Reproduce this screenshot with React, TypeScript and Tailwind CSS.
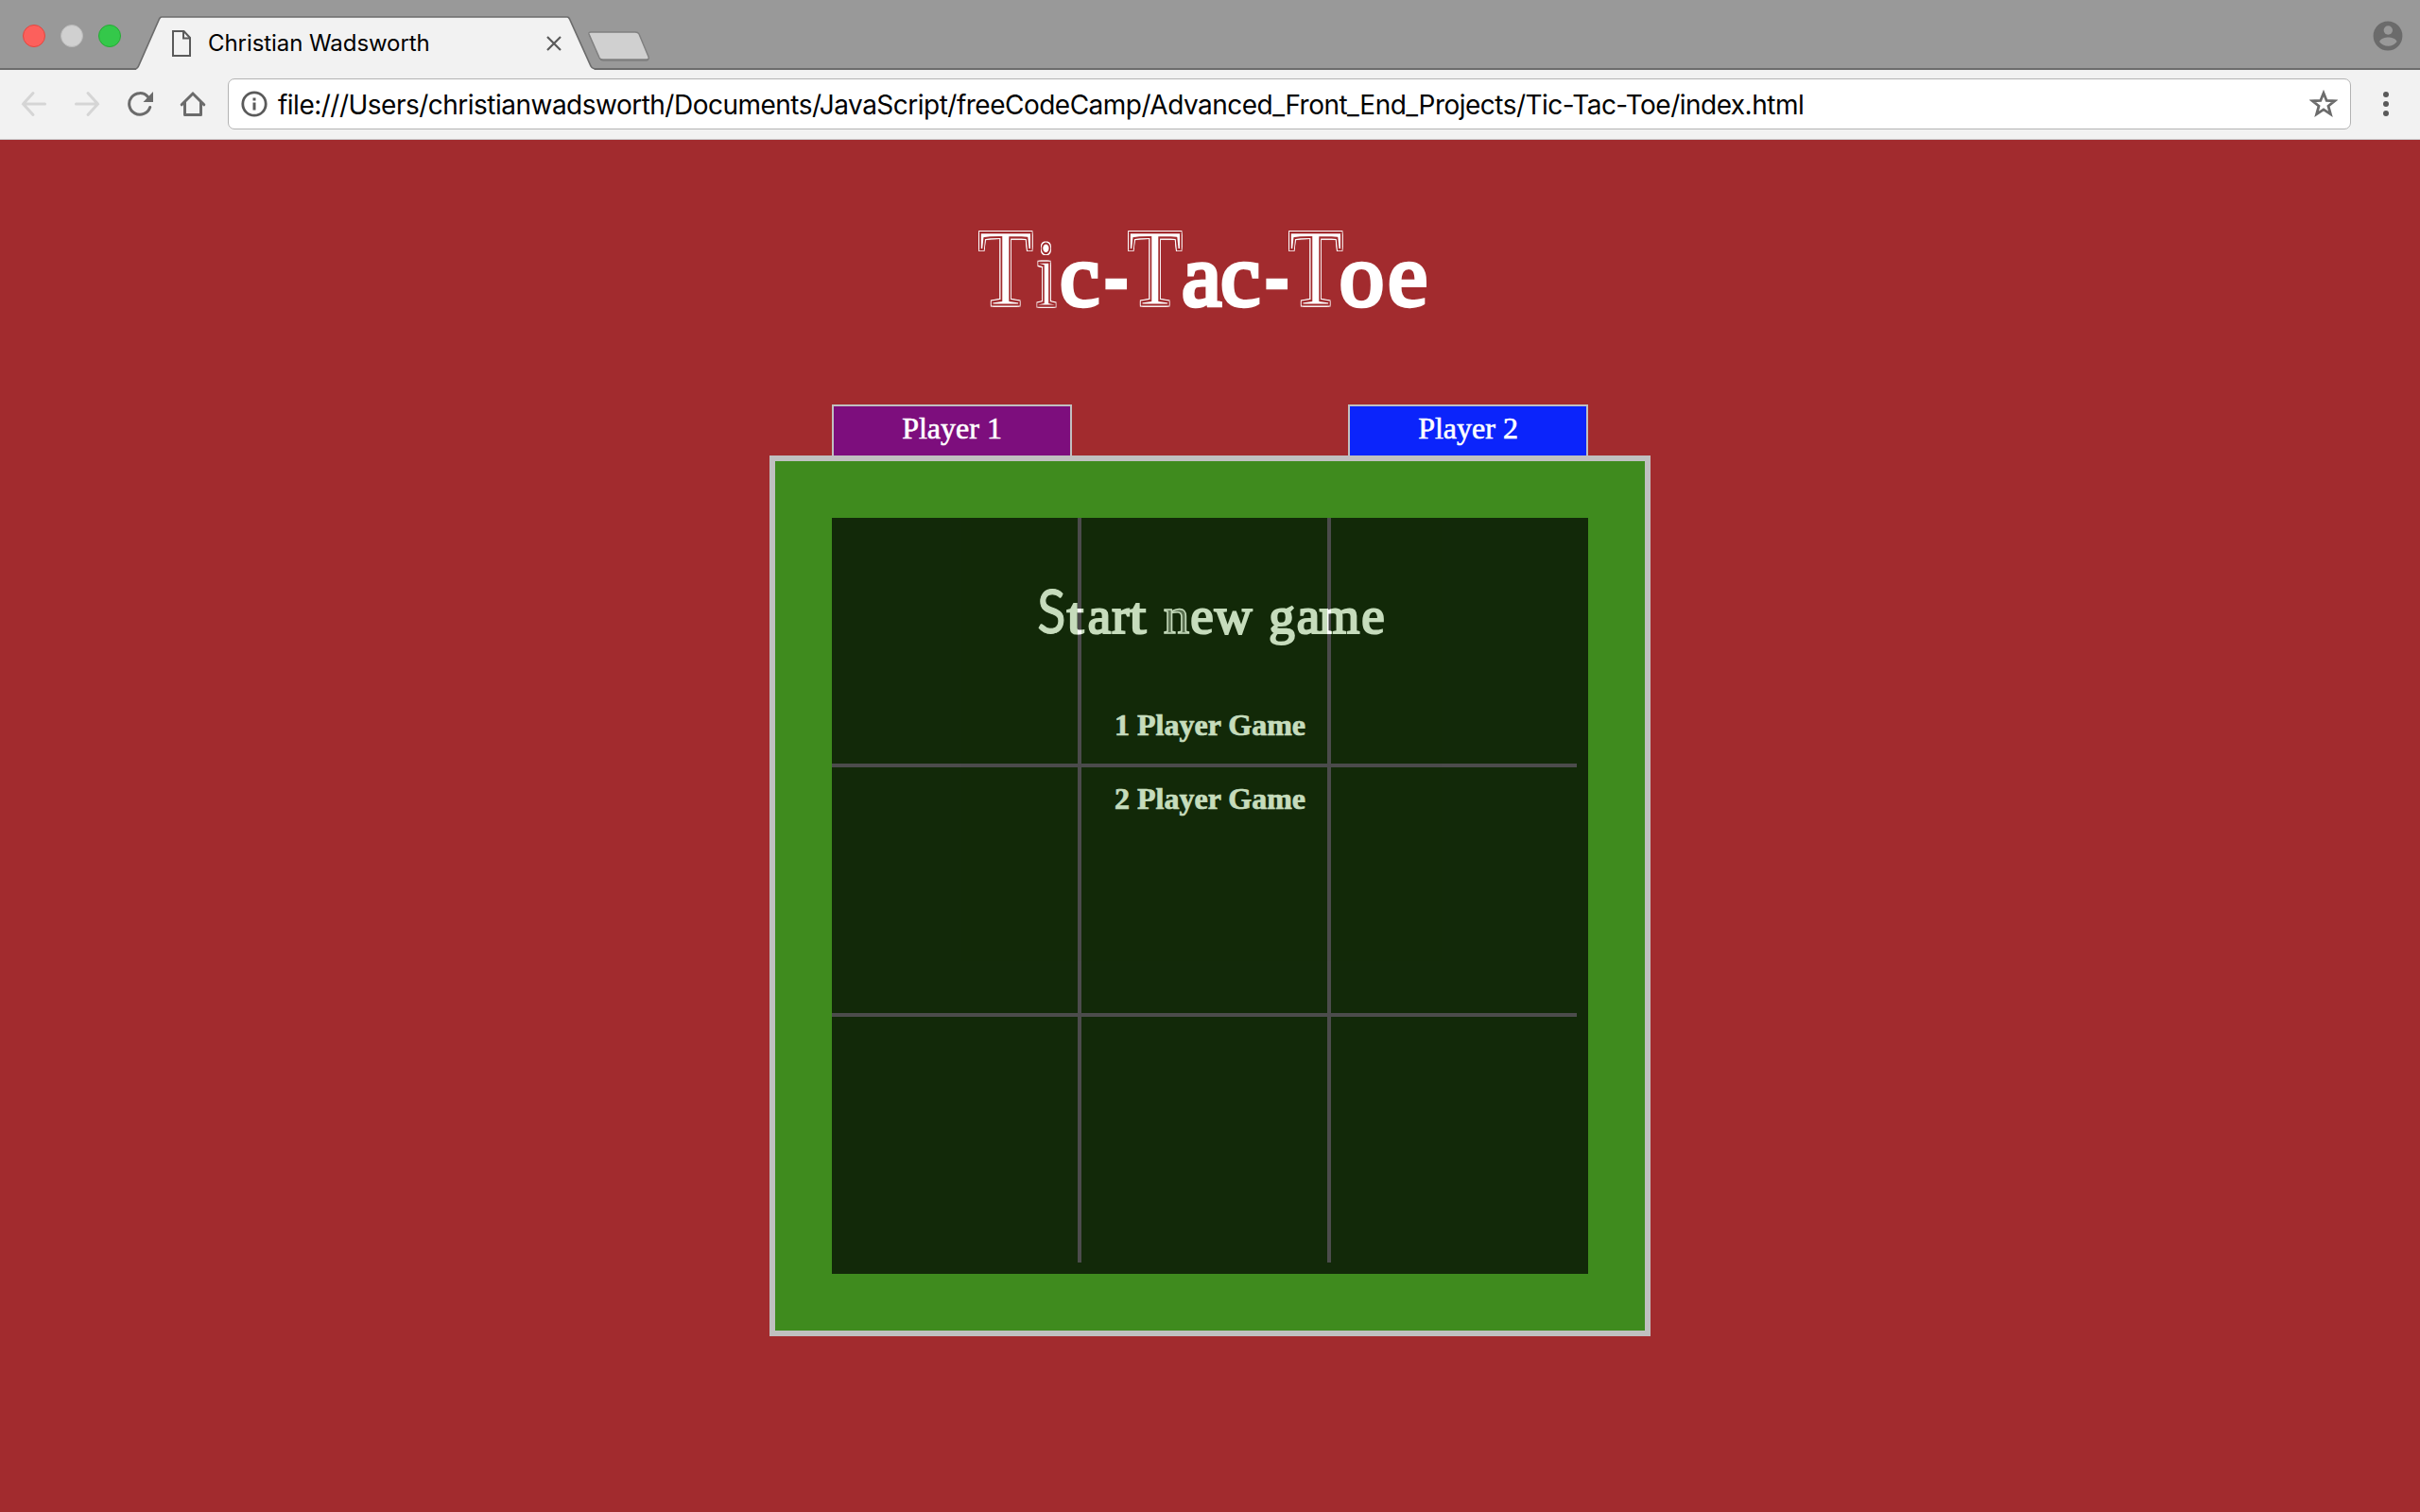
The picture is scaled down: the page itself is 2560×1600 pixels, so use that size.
import React from "react";

const outlined =
  "inline-block origin-bottom text-white [-webkit-text-stroke:2.2px_#a22b2e] [text-shadow:2px_0_#fff,-2px_0_#fff,0_2px_#fff,0_-2px_#fff,2px_2px_#fff,-2px_2px_#fff,2px_-2px_#fff,-2px_-2px_#fff]";
const capital = `${outlined} text-[117px] scale-x-[.8]`;
const solid = "inline-block text-[94px] [-webkit-text-stroke:4.5px_#fff]";
const hyphen = "inline-block scale-x-[.78] text-[94px] [-webkit-text-stroke:4.5px_#fff]";

type Letter = { ch: string; box: string; cls: string };

const title: Letter[] = [
  { ch: "T", box: "w-[60px]", cls: capital },
  { ch: "i", box: "w-[21px] ml-[2px]", cls: `${outlined} text-[100px] scale-x-[.75]` },
  { ch: "c", box: "w-[40px] ml-[5px]", cls: solid },
  { ch: "-", box: "w-[24px] ml-[7px]", cls: hyphen },
  { ch: "T", box: "w-[60px] ml-[-1px]", cls: capital },
  { ch: "a", box: "w-[46px] ml-[-4px]", cls: solid },
  { ch: "c", box: "w-[40px] ml-[-2px]", cls: solid },
  { ch: "-", box: "w-[24px] ml-[7px]", cls: hyphen },
  { ch: "T", box: "w-[60px] ml-[-1px]", cls: capital },
  { ch: "o", box: "w-[47px] ml-[-5px]", cls: solid },
  { ch: "e", box: "w-[40px] ml-[5px]", cls: solid },
];

const heading: Letter[] = [
  { ch: "S", box: "w-[26px]", cls: "inline-block font-[Lato] text-[64px] scale-x-[.87] [-webkit-text-stroke:1px_#fff]" },
  { ch: "t", box: "w-[18px] ml-[4px]", cls: "inline-block scale-x-[1.15]" },
  { ch: "a", box: "w-[26px] ml-[3px]", cls: "" },
  { ch: "r", box: "w-[19px]", cls: "" },
  { ch: "t", box: "w-[18px]", cls: "inline-block scale-x-[1.15]" },
  { ch: "n", box: "w-[27px] ml-[18px]", cls: "text-white/40 [-webkit-text-stroke:1.5px_#fff]" },
  { ch: "e", box: "w-[23px] ml-[2px]", cls: "" },
  { ch: "w", box: "w-[41px] ml-[1px]", cls: "" },
  { ch: "g", box: "w-[26px] ml-[18px]", cls: "" },
  { ch: "a", box: "w-[26px] ml-[2px]", cls: "" },
  { ch: "m", box: "w-[40px]", cls: "" },
  { ch: "e", box: "w-[23px] ml-[4px]", cls: "" },
];

function Letters({ items }: { items: Letter[] }) {
  return (
    <>
      {items.map((l, i) => (
        <span key={i} className={`flex shrink-0 justify-center ${l.box}`}>
          <span className={l.cls}>{l.ch}</span>
        </span>
      ))}
    </>
  );
}

function TabStrip() {
  return (
    <div className="flex h-[74px] border-b-2 border-[#6c6c6c] bg-[#999]">
      <div className="flex w-[144px] items-start gap-4 pl-6 pt-[26px]">
        <span className="h-6 w-6 rounded-full border border-[#e2463f] bg-[#fc605c]" />
        <span className="h-6 w-6 rounded-full border border-[#b9b9b9] bg-[#d0d0d0]" />
        <span className="h-6 w-6 rounded-full border border-[#27aa35] bg-[#34c84a]" />
      </div>
      <div className="relative h-[74px] w-[485px]">
        <svg className="absolute inset-0" width="485" height="74" viewBox="0 0 485 74">
          <path d="M-1 74 L0 73 Q1.500 72.500 2.500 70 L24.500 20 Q25.500 18 27 18 H456 Q457.500 18 458.500 20 L481 70 Q482 72.500 484 73 L486 74Z" fill="#f2f2f2" />
          <path d="M-1 73.200 Q1.500 72.500 2.500 70 L24.500 20 Q25.500 18 27 18 H456 Q457.500 18 458.500 20 L481 70 Q482 72.500 486 73.200" fill="none" stroke="#6c6c6c" strokeWidth="1.700" />
        </svg>
        <div className="relative flex h-full items-center pl-[37px] pt-[18px]">
          <svg width="22" height="28" viewBox="0 0 22 28" fill="none" stroke="#5a5a5a" strokeWidth="2">
            <path d="M2 1H13.500L20 8V27H2Z" />
            <path d="M13 1V8.500H20" />
          </svg>
          <span className="ml-[17px] w-[250px] whitespace-nowrap font-[Inter] text-[24px] leading-8 tracking-[-0.07px] text-black">
            Christian Wadsworth
          </span>
          <svg className="ml-[108px]" width="16" height="16" viewBox="0 0 16 16" stroke="#5a5a5a" strokeWidth="2.200">
            <path d="M1 1L15 15M15 1L1 15" />
          </svg>
        </div>
      </div>
      <svg className="ml-[-8px] mt-[32px]" width="68" height="34" viewBox="0 0 68 34">
        <path d="M4 3H51Q54 3 55 5L65 29Q66 32.500 63 32.500H17Q14 32.500 13 30L2 5Q1.500 3 4 3Z" fill="#777" />
        <path d="M4 2H51Q54 2 55 4L65 28Q66 31 63 31H17Q14 31 13 29L2 4Q1.500 2 4 2Z" fill="#d0d0d0" stroke="#808080" strokeWidth="1.500" />
      </svg>
      <svg className="ml-auto mr-[18px] mt-[22px]" width="32" height="32" viewBox="0 0 32 32">
        <circle cx="16" cy="16" r="15.400" fill="#6b6b6b" />
        <circle cx="16.300" cy="10" r="4.700" fill="#999" />
        <path d="M7 22C9 18.500 13 17.500 16.300 17.500S24 18.500 25.600 22C23.500 25 20 26.800 16.300 26.800S9 25 7 22Z" fill="#999" />
      </svg>
    </div>
  );
}

function Toolbar() {
  return (
    <div className="flex h-[74px] items-center border-b border-[#c9c9cb] bg-[#f2f2f2] pb-px">
      <svg className="ml-[22px]" width="28" height="28" viewBox="0 0 28 28" fill="none" stroke="#d5d5d5" strokeWidth="3" strokeLinecap="round">
        <path d="M13 2.500L2.500 14L13 25.500M2.500 14H25.500" />
      </svg>
      <svg className="ml-7" width="28" height="28" viewBox="0 0 28 28" fill="none" stroke="#d5d5d5" strokeWidth="3" strokeLinecap="round">
        <path d="M15 2.500L25.500 14L15 25.500M25.500 14H2.500" />
      </svg>
      <svg className="ml-7" width="28" height="28" viewBox="0 0 28 28" fill="none" stroke="#6b6b6b" strokeWidth="3">
        <path d="M22.500 6.500A11.300 11.300 0 1 0 24.700 17.500" strokeLinecap="round" />
        <path d="M28 1V12H17.500Z" fill="#6b6b6b" stroke="none" />
      </svg>
      <svg className="ml-7" width="28" height="28" viewBox="0 0 28 28" fill="none" stroke="#6b6b6b" strokeWidth="3">
        <path d="M2.200 14.800L14 3L25.800 14.800" strokeLinecap="round" />
        <path d="M5.500 12V25.500H22.500V12" strokeLinejoin="round" />
      </svg>
      <div className="ml-[23px] flex h-[54px] w-[2246px] items-center rounded-[7px] border border-[#b3b3b3] bg-white">
        <svg className="ml-[13px]" width="28" height="28" viewBox="0 0 28 28">
          <circle cx="14" cy="14" r="12.200" fill="none" stroke="#5a5a5a" strokeWidth="2.800" />
          <path d="M12.500 7.500h3v3h-3zM12.500 12.500h3v8h-3z" fill="#5a5a5a" />
        </svg>
        <span className="ml-[11px] whitespace-nowrap pt-0.5 font-[Inter] text-[28px] leading-9 tracking-[-0.51px] text-black">
          file:///Users/christianwadsworth/Documents/JavaScript/freeCodeCamp/Advanced_Front_End_Projects/Tic-Tac-Toe/index.html
        </span>
        <svg className="ml-auto mr-[13px]" width="30" height="30" viewBox="0 0 30 30" fill="none" stroke="#6b6b6b" strokeWidth="2.800">
          <path d="M15 3.500L18.200 11.500L26.800 11.800L20 17.200L22.400 25.800L15 20.900L7.600 25.800L10 17.200L3.200 11.800L11.800 11.500Z" />
        </svg>
      </div>
      <div className="ml-[34px] flex flex-col gap-1">
        <span className="h-1.5 w-1.5 rounded-full bg-[#5a5a5a]" />
        <span className="h-1.5 w-1.5 rounded-full bg-[#5a5a5a]" />
        <span className="h-1.5 w-1.5 rounded-full bg-[#5a5a5a]" />
      </div>
    </div>
  );
}

const cells = [
  "border-r-4 border-b-4", "border-r-4 border-b-4", "border-b-4",
  "border-r-4 border-b-4", "border-r-4 border-b-4", "border-b-4",
  "border-r-4", "border-r-4", "",
];

export default function App() {
  return (
    <div className="h-[1600px] w-[2560px] overflow-hidden bg-[#a22b2e] font-['Liberation_Serif',serif] text-white">
      <TabStrip />
      <Toolbar />
      <main className="flex flex-col items-center">
        <h1 className="flex h-[280px] w-[492px] items-baseline pt-[71px] leading-[130px]">
          <Letters items={title} />
        </h1>
        <div className="flex h-[54px] w-[800px] justify-between text-center text-[32px] leading-[47px] [-webkit-text-stroke:0.6px_#fff]">
          <div className="w-[254px] border-2 border-b-0 border-[#c0c0c0] bg-[#7d0e7d]">Player 1</div>
          <div className="w-[254px] border-2 border-b-0 border-[#c0c0c0] bg-[#0b24fb]">Player 2</div>
        </div>
        <div className="h-[932px] w-[932px] border-[6px] border-[#c0c0c0] bg-[#3f8b1e] p-[60px]">
          <div className="relative h-[800px] w-[800px]">
            <div className="grid h-[788px] w-[788px] grid-cols-[264px_264px_260px] grid-rows-[264px_264px_260px]">
              {cells.map((c, i) => (
                <div key={i} className={`border-white ${c}`} />
              ))}
            </div>
            <div className="absolute inset-0 flex flex-col items-center bg-black opacity-70">
              <h2 className="ml-1.5 mt-[58px] flex h-[122px] w-[368px] items-baseline text-[55px] leading-[80px] [-webkit-text-stroke:2.2px_#fff]">
                <Letters items={heading} />
              </h2>
              <button className="h-[78px] text-[32px] font-bold leading-[60px] [-webkit-text-stroke:0.7px_#fff]">1 Player Game</button>
              <button className="h-[78px] text-[32px] font-bold leading-[60px] [-webkit-text-stroke:0.7px_#fff]">2 Player Game</button>
            </div>
          </div>
        </div>
      </main>
    </div>
  );
}
